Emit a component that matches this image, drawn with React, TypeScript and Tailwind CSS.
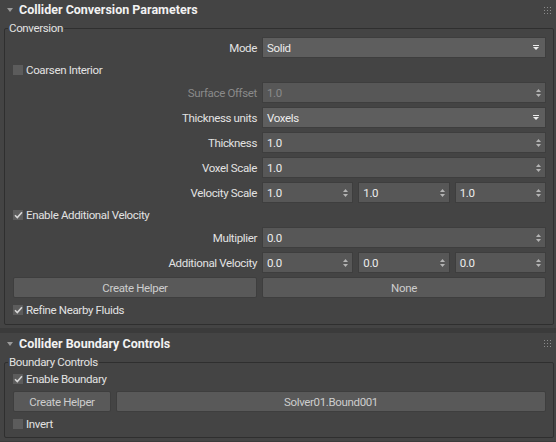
import React from 'react';

// 3ds Max style rollout panel: dark theme, fieldset groups, spinners and dropdowns

function Grip() {
  return (
    <svg width="7" height="7" viewBox="0 0 7 7" className="shrink-0">
      {[0, 3, 6].map((y) =>
        [0, 3, 6].map((x) => <rect key={`${x}-${y}`} x={x} y={y} width="1" height="1" fill="#8c8c8c" />)
      )}
    </svg>
  );
}

function RolloutHeader({ title, tall }: { title: string; tall?: boolean }) {
  return (
    <div className={`flex items-center ${tall ? 'h-[21px]' : 'h-[20px]'} pl-[7px] pr-[5px]`}>
      <svg width="6" height="4" viewBox="0 0 6 4" className="mr-[6px]">
        <polygon points="0,0 6,0 3,4" fill="#9a9a9a" />
      </svg>
      <span className="font-bold text-[12.5px] tracking-normal text-[#f2f2f2] flex-1">{title}</span>
      <Grip />
    </div>
  );
}

function SpinArrows() {
  return (
    <svg width="5" height="8" viewBox="0 0 5 8" className="shrink-0">
      <polygon points="2.5,0 5,3 0,3" fill="#b4b4b4" />
      <polygon points="0,5 5,5 2.5,8" fill="#b4b4b4" />
    </svg>
  );
}

function Spinner({ value, disabled }: { value: string; disabled?: boolean }) {
  return (
    <div className="flex-1 flex items-center h-[21px] bg-[#575757] border border-[#3e3e3e] pl-[4px] pr-[4px]">
      <span className={`flex-1 ${disabled ? 'text-[#8a8a8a]' : 'text-[#ececec]'}`}>{value}</span>
      <SpinArrows />
    </div>
  );
}

function Dropdown({ value }: { value: string }) {
  return (
    <div className="flex-1 flex items-center h-[21px] bg-[#5e5e5e] border border-[#3e3e3e] pl-[4px] pr-[6px]">
      <span className="flex-1 text-[#ececec]">{value}</span>
      <svg width="6" height="5" viewBox="0 0 6 5" className="shrink-0">
        <rect x="0" y="0" width="6" height="1" fill="#ececec" />
        <polygon points="0,2 6,2 3,5" fill="#ececec" />
      </svg>
    </div>
  );
}

function Row({ label, disabled, children }: { label: string; disabled?: boolean; children: React.ReactNode }) {
  return (
    <div className="flex items-center gap-[5px]">
      <span className={`w-[244px] text-right ${disabled ? 'text-[#8a8a8a]' : 'text-[#e2e2e2]'}`}>{label}</span>
      <div className="flex-1 flex gap-[5px]">{children}</div>
    </div>
  );
}

function Check({ label, checked }: { label: string; checked?: boolean }) {
  return (
    <div className="flex items-center h-[16px] gap-[3px]">
      <div className="w-[10px] h-[10px] bg-[#5c5c5c] flex items-center justify-center">
        {checked && (
          <svg width="9" height="8" viewBox="0 0 9 8">
            <path d="M1 4.2 L3.3 6.5 L8 1.2" stroke="#d6d6d6" strokeWidth="1.6" fill="none" />
          </svg>
        )}
      </div>
      <span className="text-[#e2e2e2]">{label}</span>
    </div>
  );
}

function Button({ label, className = '' }: { label: string; className?: string }) {
  return (
    <div className={`h-[21px] flex items-center justify-center rounded-[2px] bg-[#595959] border border-[#3e3e3e] text-[#cdcdcd] ${className}`}>
      {label}
    </div>
  );
}

function Group({ legend, children }: { legend: string; children: React.ReactNode }) {
  return (
    <fieldset className="ml-[4px] mr-[2px] border border-[#2f2f2f] rounded-[2px] pl-[3px] pr-[3px]">
      <legend className="px-[1px] leading-[16px] text-[#e2e2e2]">{legend}</legend>
      {children}
    </fieldset>
  );
}

export default function App() {
  return (
    <div className="w-[556px] h-[442px] overflow-hidden bg-[#3b3b3b] text-[11.5px] tracking-[-0.35px] leading-[16px] font-['Roboto','Liberation_Sans',sans-serif]">
      {/* Rollout 1 */}
      <div className="bg-[#444444] pb-[3px]">
        <RolloutHeader title="Collider Conversion Parameters" />
        <Group legend="Conversion">
          <div className="flex flex-col gap-[4px] pt-[1px] pb-[6px] pl-[5px] pr-[4px]">
            <Row label="Mode">
              <Dropdown value="Solid" />
            </Row>
            <Check label="Coarsen Interior" />
            <Row label="Surface Offset" disabled>
              <Spinner value="1.0" disabled />
            </Row>
            <Row label="Thickness units">
              <Dropdown value="Voxels" />
            </Row>
            <Row label="Thickness">
              <Spinner value="1.0" />
            </Row>
            <Row label="Voxel Scale">
              <Spinner value="1.0" />
            </Row>
            <Row label="Velocity Scale">
              <Spinner value="1.0" />
              <Spinner value="1.0" />
              <Spinner value="1.0" />
            </Row>
            <Check label="Enable Additional Velocity" checked />
            <Row label="Multiplier">
              <Spinner value="0.0" />
            </Row>
            <Row label="Additional Velocity">
              <Spinner value="0.0" />
              <Spinner value="0.0" />
              <Spinner value="0.0" />
            </Row>
            <div className="flex gap-[5px]">
              <Button label="Create Helper" className="w-[244px]" />
              <Button label="None" className="flex-1" />
            </div>
            <Check label="Refine Nearby Fluids" checked />
          </div>
        </Group>
      </div>
      <div className="h-[5px]" />

      {/* Rollout 2 */}
      <div className="bg-[#444444] pb-[3px]">
        <RolloutHeader title="Collider Boundary Controls" tall />
        <Group legend="Boundary Controls">
          <div className="flex flex-col gap-[4px] pt-[1px] pb-[5px] pl-[5px] pr-[4px]">
            <Check label="Enable Boundary" checked />
            <div className="flex gap-[5px]">
              <Button label="Create Helper" className="w-[98px]" />
              <Button label="Solver01.Bound001" className="flex-1" />
            </div>
            <Check label="Invert" />
          </div>
        </Group>
      </div>
    </div>
  );
}
